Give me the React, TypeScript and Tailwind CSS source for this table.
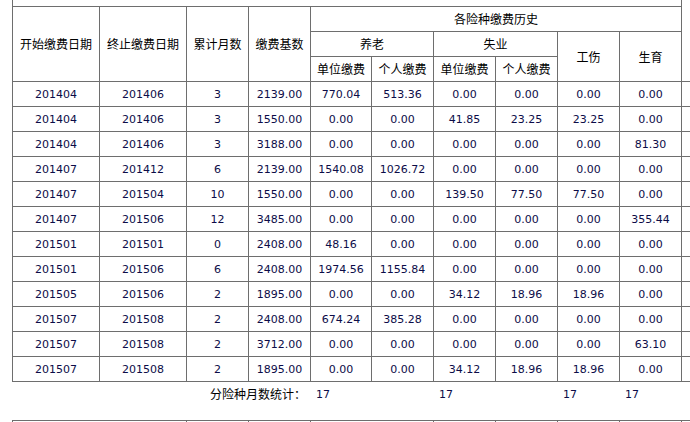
const cols = 'grid-cols-[87px_87px_62px_62px_61px_62px_62px_62px_62px_62px_90px]'

const rows: string[][] = [
  ['201404', '201406', '3', '2139.00', '770.04', '513.36', '0.00', '0.00', '0.00', '0.00'],
  ['201404', '201406', '3', '1550.00', '0.00', '0.00', '41.85', '23.25', '23.25', '0.00'],
  ['201404', '201406', '3', '3188.00', '0.00', '0.00', '0.00', '0.00', '0.00', '81.30'],
  ['201407', '201412', '6', '2139.00', '1540.08', '1026.72', '0.00', '0.00', '0.00', '0.00'],
  ['201407', '201504', '10', '1550.00', '0.00', '0.00', '139.50', '77.50', '77.50', '0.00'],
  ['201407', '201506', '12', '3485.00', '0.00', '0.00', '0.00', '0.00', '0.00', '355.44'],
  ['201501', '201501', '0', '2408.00', '48.16', '0.00', '0.00', '0.00', '0.00', '0.00'],
  ['201501', '201506', '6', '2408.00', '1974.56', '1155.84', '0.00', '0.00', '0.00', '0.00'],
  ['201505', '201506', '2', '1895.00', '0.00', '0.00', '34.12', '18.96', '18.96', '0.00'],
  ['201507', '201508', '2', '2408.00', '674.24', '385.28', '0.00', '0.00', '0.00', '0.00'],
  ['201507', '201508', '2', '3712.00', '0.00', '0.00', '0.00', '0.00', '0.00', '63.10'],
  ['201507', '201508', '2', '1895.00', '0.00', '0.00', '34.12', '18.96', '18.96', '0.00'],
]

const line = 'border-[#6e6e6e]'
const head = `flex items-center justify-center border-r border-b ${line} text-[12px] text-black`
const cell = `flex items-center justify-center border-r border-b ${line} h-[25px] pt-[2px]`

export default function App() {
  return (
    <div
      className="w-[690px] h-[422px] overflow-hidden bg-white"
      style={{ fontFamily: '"DejaVu Sans", "Noto Sans CJK SC", sans-serif' }}
    >
      {/* main table */}
      <div className={`ml-[12px] w-max grid ${cols} border-l ${line}`}>
        <div className={`col-span-10 h-[7px] border-r border-b ${line}`} />
        <div className={`row-span-4 border-b ${line}`} />

        <div className={`${head} row-span-3`} style={{ fontFamily: '"Noto Sans CJK SC", sans-serif' }}>开始缴费日期</div>
        <div className={`${head} row-span-3`} style={{ fontFamily: '"Noto Sans CJK SC", sans-serif' }}>终止缴费日期</div>
        <div className={`${head} row-span-3`} style={{ fontFamily: '"Noto Sans CJK SC", sans-serif' }}>累计月数</div>
        <div className={`${head} row-span-3`} style={{ fontFamily: '"Noto Sans CJK SC", sans-serif' }}>缴费基数</div>
        <div className={`${head} col-span-6 h-[25px]`} style={{ fontFamily: '"Noto Sans CJK SC", sans-serif' }}>各险种缴费历史</div>

        <div className={`${head} col-span-2 h-[25px]`} style={{ fontFamily: '"Noto Sans CJK SC", sans-serif' }}>养老</div>
        <div className={`${head} col-span-2 h-[25px]`} style={{ fontFamily: '"Noto Sans CJK SC", sans-serif' }}>失业</div>
        <div className={`${head} row-span-2`} style={{ fontFamily: '"Noto Sans CJK SC", sans-serif' }}>工伤</div>
        <div className={`${head} row-span-2`} style={{ fontFamily: '"Noto Sans CJK SC", sans-serif' }}>生育</div>

        {['单位缴费', '个人缴费', '单位缴费', '个人缴费'].map((t, i) => (
          <div key={i} className={`${head} h-[25px]`} style={{ fontFamily: '"Noto Sans CJK SC", sans-serif' }}>
            {t}
          </div>
        ))}

        {rows.map((r, ri) =>
          [
            ...r.map((v, ci) => (
              <div key={`${ri}-${ci}`} className={`${cell} text-[11px] text-[#0c0c48]`}>
                {v}
              </div>
            )),
            <div key={`${ri}-x`} className={`border-b ${line} h-[25px]`} />,
          ]
        )}
      </div>

      {/* summary row */}
      <div className={`ml-[13px] w-max grid ${cols} h-[24px] items-center`}>
        <div
          className="col-span-4 text-right pr-[5px] text-[12px] text-black"
          style={{ fontFamily: '"Noto Sans CJK SC", sans-serif' }}
        >
          分险种月数统计：
        </div>
        <div className="pl-[5px] pt-[3px] text-[11px] text-[#0c0c48]">17</div>
        <div />
        <div className="pl-[5px] pt-[3px] text-[11px] text-[#0c0c48]">17</div>
        <div />
        <div className="pl-[5px] pt-[3px] text-[11px] text-[#0c0c48]">17</div>
        <div className="pl-[5px] pt-[3px] text-[11px] text-[#0c0c48]">17</div>
      </div>

      {/* next table, only its top edge shows */}
      <div className={`mt-[14px] ml-[12px] w-max grid ${cols} border-l border-t ${line}`}>
        <div className={`col-span-2 h-[20px] border-r ${line}`} />
        <div className={`h-[20px] border-r ${line}`} />
        <div className={`h-[20px] border-r ${line}`} />
        <div className={`col-span-2 h-[20px] border-r ${line}`} />
        <div className={`h-[20px] border-r ${line}`} />
        <div className={`h-[20px] border-r ${line}`} />
        <div className={`h-[20px] border-r ${line}`} />
        <div className={`h-[20px] border-r ${line}`} />
        <div className="h-[20px]" />
      </div>
    </div>
  )
}
